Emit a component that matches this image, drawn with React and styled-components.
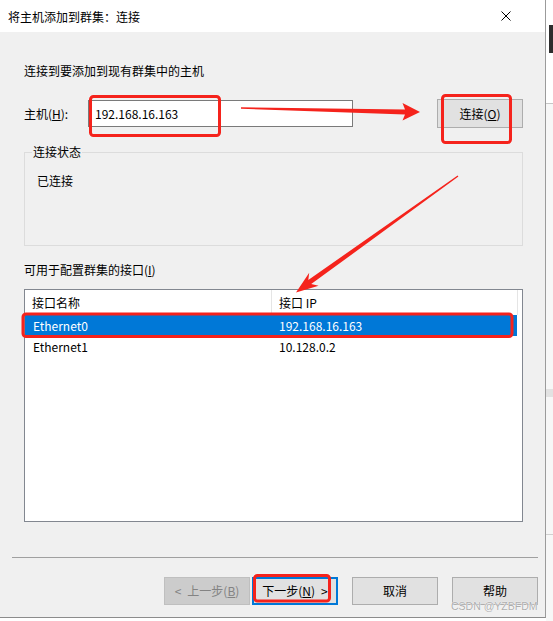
import React from 'react';
import styled, { createGlobalStyle } from 'styled-components';

const GlobalStyle = createGlobalStyle`
  html, body {
    margin: 0;
    padding: 0;
    background: #fff;
  }
  body {
    font-family: "Noto Sans CJK SC", "Noto Sans", sans-serif;
    font-size: 12px;
    color: #000;
  }
`;

const Screen = styled.div`
  position: relative;
  width: 553px;
  height: 621px;
  display: flex;
  align-items: flex-start;
  overflow: hidden;
  background: #fff;
`;

const Dialog = styled.div`
  box-sizing: border-box;
  width: 546px;
  height: 618px;
  display: flex;
  flex-direction: column;
  background: #f0f0f0;
  border-right: 1px solid #9b9b9b;
  border-bottom: 1px solid #8c8c8c;
`;

const TitleBar = styled.div`
  height: 32px;
  flex: none;
  display: flex;
  align-items: center;
  justify-content: space-between;
  padding: 0 34px 0 8px;
  background: #fff;
`;

const Title = styled.span`
  line-height: 16px;
  padding-top: 1px;
`;

const Body = styled.div`
  padding: 31px 22px 0 24px;
  display: flex;
  flex-direction: column;
`;

const Text = styled.div`
  line-height: 16px;
  white-space: nowrap;
`;

const HostRow = styled.div`
  margin-top: 20px;
  height: 29px;
  display: flex;
  align-items: center;
`;

const HostLabel = styled.div`
  width: 64px;
  line-height: 16px;
`;

const HostInput = styled.div`
  box-sizing: border-box;
  width: 265px;
  height: 27px;
  padding: 0 6px;
  display: flex;
  align-items: center;
  background: #fff;
  border: 1px solid #7a7a7a;
`;

const Button = styled.button`
  box-sizing: border-box;
  width: 86px;
  height: ${p => p.$h || 28}px;
  margin: 0;
  padding: 0;
  font: inherit;
  font-size: 12px;
  line-height: 16px;
  color: ${p => (p.$disabled ? '#838383' : '#000')};
  background: ${p => (p.$disabled ? '#cccccc' : '#e1e1e1')};
  border: ${p => (p.$default ? '2px solid #0078d7' : p.$disabled ? '1px solid #bfbfbf' : '1px solid #adadad')};
  display: flex;
  align-items: center;
  justify-content: center;
  gap: 6px;
  outline: none;
`;

const ConnectButton = styled(Button)`
  margin-left: auto;
`;

const GroupBox = styled.fieldset`
  position: relative;
  z-index: 1;
  box-sizing: border-box;
  margin: 16px 0 0;
  min-width: 0;
  height: 102px;
  background: #f0f0f0;
  border: 1px solid #dcdcdc;
  padding: 0 0 0 12px;
`;

const GroupTitle = styled.legend`
  margin-left: -5px;
  padding: 0 1px;
  line-height: 16px;
`;

const StatusText = styled(Text)`
  margin-top: 13px;
`;

const ListLabel = styled(Text)`
  margin-top: 16px;
`;

const ListView = styled.div`
  box-sizing: border-box;
  margin-top: 11px;
  height: 233px;
  background: #fff;
  border: 1px solid #828790;
`;

const HeaderRow = styled.div`
  display: flex;
  height: 25px;
`;

const HeaderCell = styled.div`
  box-sizing: border-box;
  width: ${p => p.$w}px;
  padding-left: 7px;
  padding-top: 1px;
  display: flex;
  align-items: center;
  border-right: 1px solid #e5e5e5;
  line-height: 16px;
`;

const Row = styled.div`
  display: flex;
  width: 492px;
  height: 21px;
  background: ${p => (p.$selected ? '#0078d7' : 'transparent')};
  color: ${p => (p.$selected ? '#fff' : '#000')};
`;

const Cell = styled.div`
  box-sizing: border-box;
  width: ${p => p.$w}px;
  padding-left: ${p => p.$pad}px;
  display: flex;
  align-items: center;
  line-height: 16px;
`;

const Separator = styled.div`
  margin: 35px -15px 0 -12px;
  height: 1px;
  background: #a0a0a0;
`;

const ButtonBar = styled.div`
  margin: 19px -15px 0 0;
  display: flex;
  justify-content: flex-end;
  gap: 14px;
`;

const NavPair = styled.div`
  display: flex;
  gap: 2px;
`;

const SideStrip = styled.div`
  flex: none;
  width: 7px;
  height: 621px;
  display: flex;
  flex-direction: column;
  background: #fff;
`;

const StripBlock = styled.div`
  height: ${p => p.$h}px;
  margin-left: ${p => p.$ml || 0}px;
  background: ${p => p.$c};
`;

const Annotations = styled.svg`
  position: absolute;
  z-index: 2;
  left: 0;
  top: 0;
  pointer-events: none;
`;

const Watermark = styled.span`
  position: absolute;
  z-index: 3;
  left: 451px;
  top: 600px;
  font-family: "Liberation Sans", Arial, sans-serif;
  font-size: 10.5px;
  line-height: 13px;
  color: #adadad;
  text-shadow: 0 0 1px #fff, 0 0 1px #fff;
`;

const CloseIcon = () => (
  <svg width="10" height="10" viewBox="0 0 10 10">
    <path d="M0.5 0.5 L9.5 9.5 M9.5 0.5 L0.5 9.5" stroke="#000" strokeWidth="1" fill="none" />
  </svg>
);

const rows = [
  { name: 'Ethernet0', ip: '192.168.16.163', selected: true },
  { name: 'Ethernet1', ip: '10.128.0.2' },
];

const RED = '#f5231c';

export default function App() {
  return (
    <>
      <GlobalStyle />
      <Screen>
        <Dialog>
          <TitleBar>
            <Title>将主机添加到群集：连接</Title>
            <CloseIcon />
          </TitleBar>
          <Body>
            <Text>连接到要添加到现有群集中的主机</Text>
            <HostRow>
              <HostLabel>主机(<u>H</u>):</HostLabel>
              <HostInput>192.168.16.163</HostInput>
              <ConnectButton $h={29}>
                <span>连接(<u>O</u>)</span>
              </ConnectButton>
            </HostRow>
            <GroupBox>
              <GroupTitle>连接状态</GroupTitle>
              <StatusText>已连接</StatusText>
            </GroupBox>
            <ListLabel>可用于配置群集的接口(<u>I</u>)</ListLabel>
            <ListView>
              <HeaderRow>
                <HeaderCell $w={247}>接口名称</HeaderCell>
                <HeaderCell $w={246}>接口 IP</HeaderCell>
              </HeaderRow>
              {rows.map(r => (
                <Row key={r.name} $selected={r.selected}>
                  <Cell $w={247} $pad={8}>{r.name}</Cell>
                  <Cell $w={245} $pad={7}>{r.ip}</Cell>
                </Row>
              ))}
            </ListView>
            <Separator />
            <ButtonBar>
              <NavPair>
                <Button $disabled>
                  <span>&lt;</span>
                  <span>上一步(<u>B</u>)</span>
                </Button>
                <Button $default>
                  <span>下一步(<u>N</u>)</span>
                  <span>&gt;</span>
                </Button>
              </NavPair>
              <Button>
                <span>取消</span>
              </Button>
              <Button>
                <span>帮助</span>
              </Button>
            </ButtonBar>
          </Body>
        </Dialog>
        <SideStrip>
          <StripBlock $h={25} $c="#fff" />
          <StripBlock $h={28} $ml={3} $c="#2d2d2d" />
          <StripBlock $h={50} $c="#fff" />
          <StripBlock $h={1} $c="#c6c6c6" />
          <StripBlock $h={285} $c="#f7f7f7" />
          <StripBlock $h={8} $c="#e2e2e2" />
          <StripBlock $h={137} $c="#f7f7f7" />
          <StripBlock $h={1} $c="#d0d0d0" />
          <StripBlock $h={86} $c="#f7f7f7" />
        </SideStrip>

        <Annotations width="553" height="621" viewBox="0 0 553 621">
          <g fill="none" stroke={RED} strokeWidth="3">
            <rect x="90.5" y="96.5" width="129" height="39" rx="3" />
            <rect x="442.5" y="95.5" width="68" height="47" rx="3" />
            <rect x="23" y="314" width="489" height="22.5" rx="3" />
            <rect x="254.5" y="575.5" width="75" height="25.5" rx="3" />
          </g>
          <path
            d="M241 107.3 L405 109.6 L402.5 103 L420 112 L402.5 120.5 L405 114.6 L241 108.7 Z"
            fill={RED}
          />
          <path
            d="M458.4 176.6 L311.2 284.1 L318.6 285.7 L296 292.5 L309.2 272.7 L308.3 280.0 L457.6 175.4 Z"
            fill={RED}
          />
        </Annotations>
        <Watermark>CSDN @YZBFDM</Watermark>
      </Screen>
    </>
  );
}
